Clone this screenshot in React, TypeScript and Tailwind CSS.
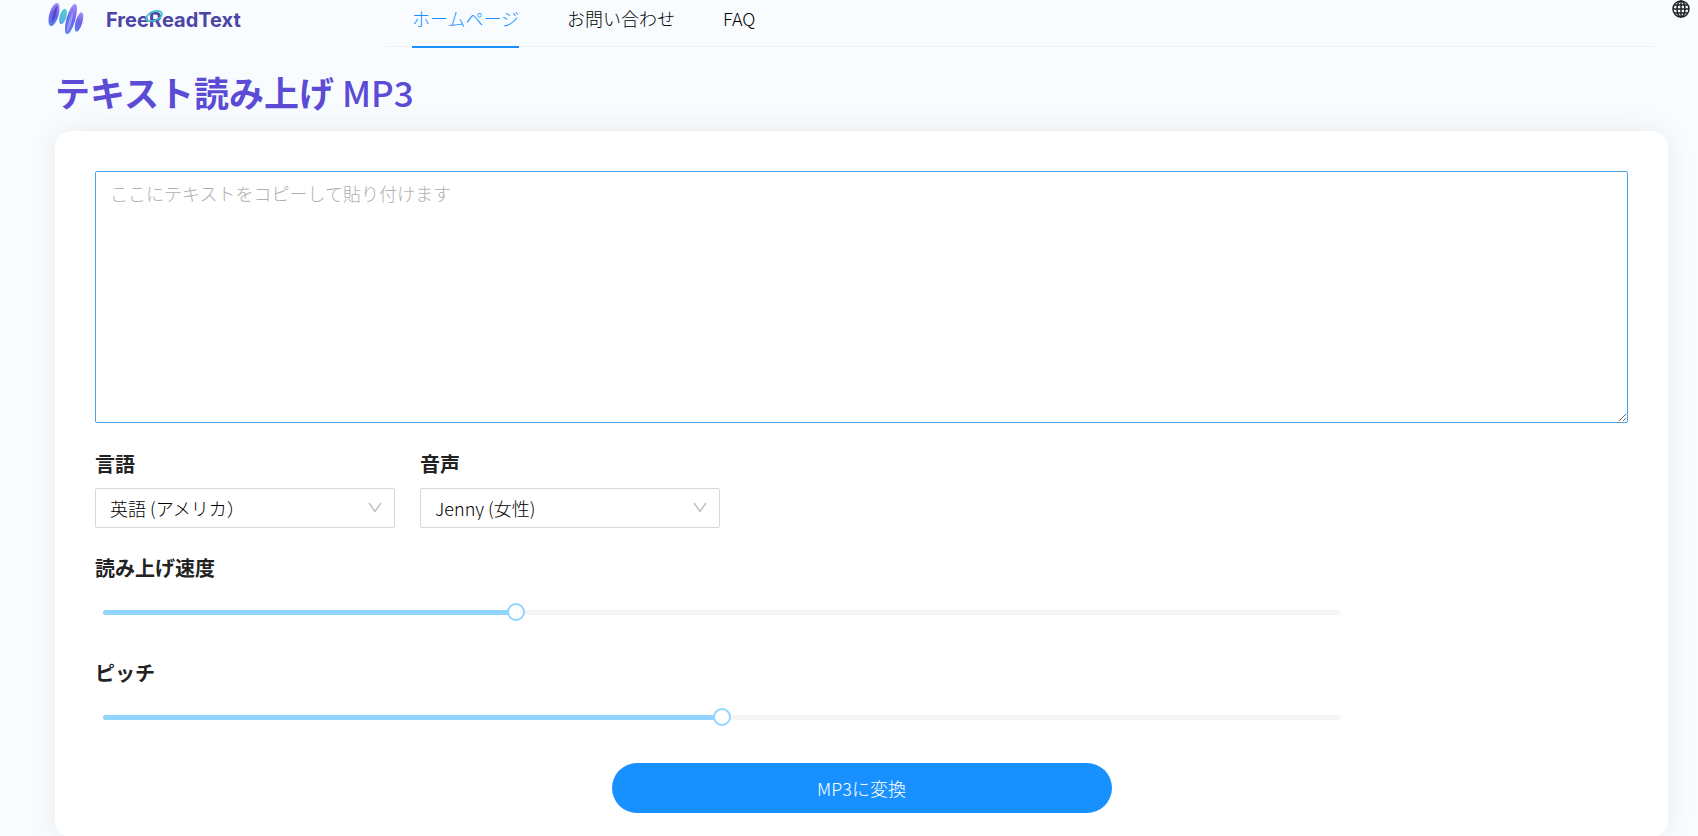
import React, { useState } from 'react';

const navItems = ['ホームページ', 'お問い合わせ', 'FAQ'];

const LogoMark = () => (
  <svg className="w-9 h-9" viewBox="0 0 36 36" fill="none" aria-hidden="true">
    <defs>
      <linearGradient id="bar" x1="0" y1="0" x2="0" y2="1">
        <stop offset="0" stopColor="#a78df6" />
        <stop offset="0.5" stopColor="#6a63ea" />
        <stop offset="1" stopColor="#5f7df0" />
      </linearGradient>
      <linearGradient id="teal" x1="0" y1="0" x2="0" y2="1">
        <stop offset="0" stopColor="#4fd3cf" />
        <stop offset="1" stopColor="#5aa9e8" />
      </linearGradient>
    </defs>
    <ellipse cx="6" cy="14.5" rx="4.6" ry="12" transform="rotate(16 6 14.5)" fill="url(#bar)" />
    <ellipse cx="6.5" cy="14" rx="1.4" ry="8.5" transform="rotate(16 6.5 14)" fill="#5048cf" />
    <ellipse cx="15" cy="16.5" rx="3.4" ry="8" transform="rotate(16 15 16.5)" fill="url(#teal)" />
    <ellipse cx="23" cy="19" rx="4.4" ry="15.5" transform="rotate(16 23 19)" fill="url(#bar)" />
    <ellipse cx="22" cy="22" rx="1.4" ry="10" transform="rotate(16 22 22)" fill="#8fa0f8" />
    <ellipse cx="31" cy="22" rx="3.4" ry="10" transform="rotate(16 31 22)" fill="url(#bar)" />
  </svg>
);

const Swoosh = () => (
  <svg
    className="absolute -left-1 top-0 w-5 h-5"
    viewBox="0 0 20 20"
    fill="none"
    stroke="#4cc3cf"
    strokeWidth="1.8"
    strokeLinecap="round"
    aria-hidden="true"
  >
    <path d="M6 13C1 14 0 10 3 7C6 3 13 2 16 4C19 7 14 12 8 13" />
  </svg>
);

const GlobeIcon = () => (
  <svg className="w-[18px] h-[18px]" viewBox="0 0 18 18" fill="none" stroke="#222" strokeWidth="1.5" aria-hidden="true">
    <circle cx="9" cy="9" r="8" />
    <ellipse cx="9" cy="9" rx="4" ry="8" />
    <path d="M9 1v16M1 9h16M2.2 5h13.6M2.2 13h13.6" />
  </svg>
);

type SelectFieldProps = { id: string; label: string; options: string[] };

const SelectField = ({ id, label, options }: SelectFieldProps) => (
  <div className="w-[300px]">
    <label htmlFor={id} className="block text-xl leading-8 font-bold mb-2">
      {label}
    </label>
    <div className="relative">
      <select
        id={id}
        className="block w-full h-10 pl-[14px] pr-10 appearance-none bg-white border border-[#d9d9d9] rounded-xs text-lg leading-6 font-light text-black outline-none"
      >
        {options.map((option) => (
          <option key={option}>{option}</option>
        ))}
      </select>
      <svg
        className="absolute right-3 top-3 w-4 h-4 pointer-events-none"
        viewBox="0 0 16 16"
        fill="none"
        stroke="#bfbfbf"
        strokeWidth="1.4"
        aria-hidden="true"
      >
        <path d="M2 3L8 11.5L14 3" />
      </svg>
    </div>
  </div>
);

type SliderFieldProps = { id: string; label: string; max: number; initial: number };

const SliderField = ({ id, label, max, initial }: SliderFieldProps) => {
  const [value, setValue] = useState(initial);

  return (
    <div className="w-5/6 pr-6">
      <label htmlFor={id} className="block text-xl leading-8 font-bold">
        {label}
      </label>
      <div className="relative mt-[19px] h-[18px] flex items-center">
        <div className="flex-1 mx-2 h-[5px] rounded-full bg-[#f5f5f5]">
          <div className="h-full rounded-full bg-[#91d5ff]" style={{ width: `${(value / max) * 100}%` }} />
        </div>
        <input
          id={id}
          type="range"
          min={0}
          max={max}
          value={value}
          onChange={(e) => setValue(Number(e.target.value))}
          className="absolute inset-0 w-full h-[18px] m-0 appearance-none bg-transparent outline-none cursor-pointer [&::-webkit-slider-thumb]:appearance-none [&::-webkit-slider-thumb]:w-[18px] [&::-webkit-slider-thumb]:h-[18px] [&::-webkit-slider-thumb]:rounded-full [&::-webkit-slider-thumb]:bg-white [&::-webkit-slider-thumb]:border-2 [&::-webkit-slider-thumb]:border-solid [&::-webkit-slider-thumb]:border-[#91d5ff]"
        />
      </div>
    </div>
  );
};

const Header = () => (
  <header className="flex items-start h-12">
    <a href="#" className="w-[386px] shrink-0 pl-12 flex items-center gap-[22px]">
      <LogoMark />
      <span className="pt-1 font-['Inter','Noto_Sans_CJK_JP',sans-serif] text-xl leading-7 font-bold text-[#4b45a5]">
        Free
        <span className="relative">
          R
          <Swoosh />
        </span>
        eadText
      </span>
    </a>
    <nav className="flex-1 flex gap-12 h-[47px] px-[26px] border-b border-[#f0f0f0]">
      {navItems.map((item, i) => (
        <a
          key={item}
          href="#"
          className={
            i === 0
              ? 'h-12 pt-1 text-lg leading-7 font-light text-[#1890ff] border-b-2 border-[#1890ff]'
              : 'h-12 pt-1 text-lg leading-7 font-light text-black'
          }
        >
          {item}
        </a>
      ))}
    </nav>
    <div className="w-11 shrink-0 flex justify-end pr-2">
      <button type="button" aria-label="言語">
        <GlobeIcon />
      </button>
    </div>
  </header>
);

const App = () => {
  const [text, setText] = useState('');

  return (
    <div className="min-h-screen bg-[#f9fcff] text-[#222] font-['Noto_Sans_CJK_JP',sans-serif]">
      <Header />
      <main className="pl-[55px] pr-[30px] pt-5">
        <h1 className="text-[35px] leading-[48px] font-bold text-[#5b4bd5]">
          テキスト読み上げ <span className="font-medium">MP3</span>
        </h1>
        <section className="mt-[15px] p-10 pb-6 bg-white rounded-2xl shadow-[0_0_30px_rgba(0,0,0,0.07)]">
          <textarea
            aria-label="テキスト"
            value={text}
            onChange={(e) => setText(e.target.value)}
            placeholder="ここにテキストをコピーして貼り付けます"
            className="block w-full h-[252px] px-[14px] py-[7px] border border-[#4ba3e3] rounded-xs text-lg leading-7 font-light placeholder:text-[#b0b0b0] outline-none resize"
          />
          <div className="mt-[25px] flex gap-[25px]">
            <SelectField id="language" label="言語" options={['英語 (アメリカ）']} />
            <SelectField id="voice" label="音声" options={['Jenny (女性)']} />
          </div>
          <div className="mt-6 flex flex-col gap-9">
            <SliderField id="speed" label="読み上げ速度" max={3} initial={1} />
            <SliderField id="pitch" label="ピッチ" max={2} initial={1} />
          </div>
          <button
            type="button"
            className="block w-[500px] h-[50px] mx-auto mt-[37px] rounded-full bg-[#1890ff] text-white text-lg font-light"
          >
            MP3に変換
          </button>
        </section>
      </main>
    </div>
  );
};

export default App;
